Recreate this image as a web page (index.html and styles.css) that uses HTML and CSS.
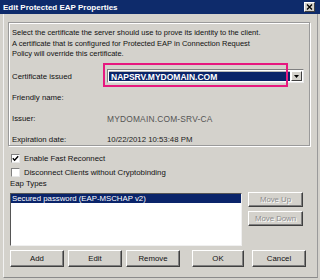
FILE: index.html
```html
<!DOCTYPE html>
<html lang="en">
<head>
    <meta charset="UTF-8">
    <title>Edit Protected EAP Properties</title>
    <link rel="stylesheet" href="styles.css">
</head>
<body>
    <div class="titlebar">
        <span class="title">Edit Protected EAP Properties</span>
        <button class="close-button">
            <svg width="7" height="6" viewBox="0 0 7 6"><path d="M1 0.5 L6 5.5 M6 0.5 L1 5.5" stroke="#000" stroke-width="1.3" fill="none"/></svg>
        </button>
    </div>

    <div class="content">
        <div class="cert-group">
            <p class="intro">Select the certificate the server should use to prove its identity to the client.<br>
            A certificate that is configured for Protected EAP in Connection Request<br>
            Policy will override this certificate.</p>

            <div class="field-row cert-row">
                <span class="field-label">Certificate issued</span>
                <div class="combo">
                    <div class="combo-value">NAPSRV.MYDOMAIN.COM</div>
                    <div class="combo-button">
                        <svg width="5" height="3" viewBox="0 0 5 3"><path d="M0 0 H5 L2.5 3 Z" fill="#000"/></svg>
                    </div>
                </div>
                <div class="highlight"></div>
            </div>
            <div class="field-row">
                <span class="field-label">Friendly name:</span>
            </div>
            <div class="field-row">
                <span class="field-label">Issuer:</span>
                <span class="field-value issuer">MYDOMAIN.COM-SRV-CA</span>
            </div>
            <div class="field-row">
                <span class="field-label">Expiration date:</span>
                <span class="field-value">10/22/2012 10:53:48 PM</span>
            </div>
        </div>

        <div class="options">
            <label class="check-row">
                <span class="checkbox">
                    <svg width="7" height="7" viewBox="0 0 7 7"><path d="M0.8 3.2 L2.6 5.2 L6.2 1.2" stroke="#000" stroke-width="1.4" fill="none"/></svg>
                </span>
                Enable Fast Reconnect
            </label>
            <label class="check-row">
                <span class="checkbox"></span>
                Disconnect Clients without Cryptobinding
            </label>
        </div>

        <div class="eap-label">Eap Types</div>
        <div class="eap-row">
            <div class="listbox">
                <div class="list-item selected">Secured password (EAP-MSCHAP v2)</div>
            </div>
            <div class="side-buttons">
                <button class="button move-up" disabled>Move Up</button>
                <button class="button move-down" disabled>Move Down</button>
            </div>
        </div>

        <div class="footer">
            <button class="button">Add</button>
            <button class="button">Edit</button>
            <button class="button">Remove</button>
            <button class="button ok-button">OK</button>
            <button class="button cancel-button">Cancel</button>
        </div>
    </div>
</body>
</html>
```

FILE: styles.css
```css
:root {
    --face: #d4d2cc;
    --shadow: #808080;
    --dark-shadow: #404040;
    --highlight: #ffffff;
    --title-bg: #0e2b6b;
    --select-bg: #0a246a;
    --marker: #e6197f;
}

* {
    margin: 0;
    padding: 0;
    box-sizing: border-box;
}

body {
    width: 320px;
    height: 280px;
    overflow: hidden;
    background: var(--face);
    font-family: 'Liberation Sans', Arial, sans-serif;
    font-size: 7.8px;
    color: #111;
}

.titlebar {
    height: 14px;
    background: var(--title-bg);
    display: flex;
    align-items: center;
    justify-content: space-between;
    padding: 0 5px 0 3px;
}

.title {
    color: #fff;
    font-weight: 700;
    font-size: 8px;
}

.close-button {
    width: 11px;
    height: 10px;
    background: var(--face);
    border: 1px solid;
    border-color: var(--highlight) var(--dark-shadow) var(--dark-shadow) var(--highlight);
    display: flex;
    align-items: center;
    justify-content: center;
}

.content {
    height: 264px;
    margin: 0 2px 0 3px;
    border-left: 1px solid #f2f2f2;
    border-right: 1px solid #9a9a9a;
    border-bottom: 1px solid #8a8a8a;
    padding-top: 8px;
}

.cert-group {
    width: 302px;
    height: 124px;
    margin-left: 4px;
    border: 1px solid #9a9a9a;
    box-shadow: inset 1px 1px 0 #fff, 1px 1px 0 #fff;
    padding: 5px 0 0 3px;
}

.intro {
    font-size: 7.5px;
    line-height: 10.5px;
    height: 37px;
    white-space: nowrap;
}

.field-row {
    display: flex;
    align-items: center;
    height: 21px;
}

.cert-row {
    position: relative;
    height: 22px;
}

.field-label {
    width: 95px;
}

.field-value {
    color: #222;
}

.field-value.issuer {
    color: #555;
    font-size: 8.4px;
    letter-spacing: 0.2px;
}

.combo {
    width: 197px;
    height: 14px;
    display: flex;
    gap: 1px;
    padding: 1px;
    background: #fff;
    border: 1px solid;
    border-color: var(--shadow) #e8e8e8 #e8e8e8 var(--shadow);
}

.combo-value {
    flex: 1;
    background: var(--select-bg);
    color: #fff;
    font-weight: 700;
    font-size: 8.5px;
    line-height: 10px;
    padding-left: 2px;
    border-top: 1px solid #b8b8b8;
}

.combo-button {
    width: 11px;
    background: var(--face);
    border: 1px solid;
    border-color: var(--highlight) var(--dark-shadow) var(--dark-shadow) var(--highlight);
    display: flex;
    align-items: center;
    justify-content: center;
}

.highlight {
    position: absolute;
    left: 91px;
    top: -2px;
    width: 185px;
    height: 24px;
    border: 2px solid var(--marker);
    pointer-events: none;
}

.options {
    margin-top: 5px;
    padding-left: 7px;
}

.check-row {
    display: flex;
    align-items: center;
    gap: 3px;
    height: 14px;
}

.checkbox {
    width: 9px;
    height: 9px;
    background: #fff;
    border: 1px solid;
    border-color: var(--shadow) #e8e8e8 #e8e8e8 var(--shadow);
    display: flex;
    align-items: center;
    justify-content: center;
    margin-right: 1px;
}

.eap-label {
    height: 10px;
    line-height: 10px;
    padding-left: 6px;
}

.eap-row {
    display: flex;
    gap: 6px;
    margin-top: 4px;
    padding-left: 6px;
}

.listbox {
    width: 232px;
    height: 53px;
    background: #fff;
    border: 1px solid;
    border-color: #555 #f0f0f0 #f0f0f0 #555;
}

.list-item {
    height: 9px;
    line-height: 9px;
    padding-left: 1px;
}

.list-item.selected {
    background: var(--select-bg);
    color: #fff;
}

.side-buttons {
    display: flex;
    flex-direction: column;
    gap: 4px;
    margin-top: -1px;
}

.button {
    width: 54px;
    height: 17px;
    background: var(--face);
    border: 1px solid;
    border-color: var(--highlight) var(--dark-shadow) var(--dark-shadow) var(--highlight);
    box-shadow: inset -1px -1px 0 var(--shadow);
    font-family: inherit;
    font-size: 7.8px;
    color: #111;
}

.side-buttons .button {
    width: 55px;
    height: 15px;
}

.button:disabled {
    color: #8c8c8c;
    text-shadow: 1px 1px 0 #fff;
}

.footer {
    display: flex;
    gap: 4px;
    margin-top: 4px;
    padding-left: 6px;
}

.ok-button {
    margin-left: 8px;
    width: 52px;
}

.cancel-button {
    margin-left: 4px;
}
```
